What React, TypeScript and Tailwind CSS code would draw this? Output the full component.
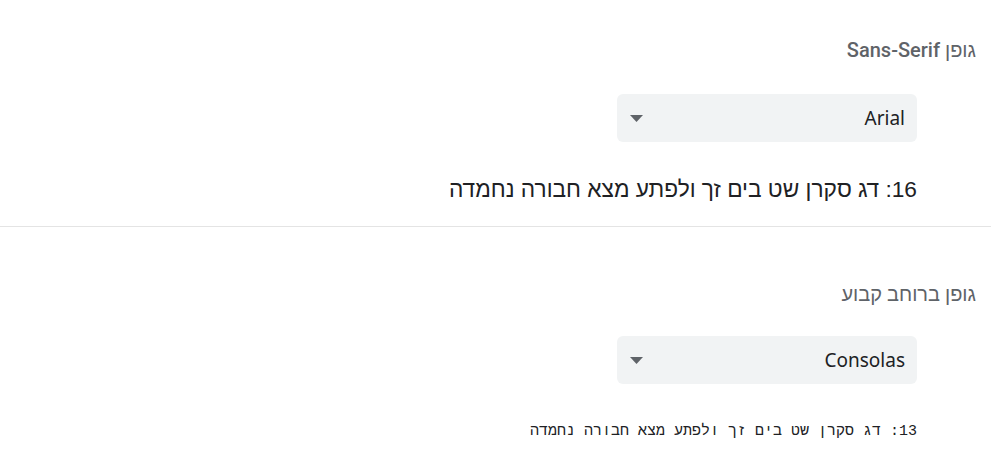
import React from "react"

function Select({ value }: { value: string }) {
  return (
    <div className="mr-[59px] flex h-[48px] w-[300px] items-center justify-between rounded-[6px] bg-[#f1f3f4] pl-[13px] pr-[12px]">
      <span className="text-[19px] text-[#202124]">{value}</span>
      <svg width="13" height="7" viewBox="0 0 13 7" className="shrink-0">
        <path d="M0 0 L13 0 L6.5 7 Z" fill="#5f6368" />
      </svg>
    </div>
  )
}

export default function App() {
  return (
    <div dir="rtl" className="h-[467px] w-[991px] bg-white font-['Segoe_UI','Noto_Sans',sans-serif] text-[#202124]">
      <div className="pr-[15px]">
        <div className="pt-[37px] font-['Roboto','Liberation_Sans',sans-serif] text-[20px] font-medium leading-[26px] text-[#5f6368]">גופן Sans-Serif</div>
        <div className="mt-[31px]">
          <Select value="Arial" />
        </div>
        <div className="mr-[59px] mt-[33px] font-['Liberation_Sans',Arial,sans-serif] text-[22.7px] leading-[28px] text-[#202124]">
          16: דג סקרן שט בים זך ולפתע מצא חבורה נחמדה
        </div>
      </div>
      <div className="mt-[23px] h-px w-full bg-[#e4e4e4]" />
      <div className="pr-[15px]">
        <div className="pt-[54px] font-['Roboto','Liberation_Sans',sans-serif] text-[20px] font-medium leading-[26px] text-[#5f6368]">גופן ברוחב קבוע</div>
        <div className="mt-[29px]">
          <Select value="Consolas" />
        </div>
        <div className="mr-[59px] mt-[38px] font-['Liberation_Mono',monospace] text-[15px] leading-[20px] text-[#202124]">
          13: דג סקרן שט בים זך ולפתע מצא חבורה נחמדה
        </div>
      </div>
    </div>
  )
}
